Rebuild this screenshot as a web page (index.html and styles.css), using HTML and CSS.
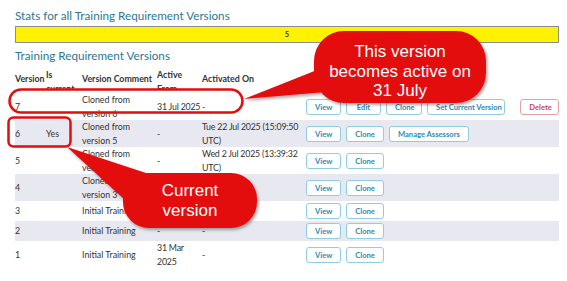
FILE: index.html
```html
<!DOCTYPE html>
<html lang="en">
<head>
    <meta charset="UTF-8">
    <meta name="viewport" content="width=device-width, initial-scale=1.0">
    <title>Training Requirement Versions</title>
    <link rel="stylesheet" href="styles.css">
</head>
<body>
    <div class="page">
        <h2>Stats for all Training Requirement Versions</h2>
        <div class="stat-bar">5</div>

        <h2 class="section-title">Training Requirement Versions</h2>
        <table class="versions">
            <colgroup>
                <col class="col-version">
                <col class="col-current">
                <col class="col-comment">
                <col class="col-from">
                <col class="col-activated">
                <col>
            </colgroup>
            <thead>
                <tr>
                    <th><div class="th-in">Version</div></th>
                    <th><div class="th-in">Is current</div></th>
                    <th><div class="th-in">Version Comment</div></th>
                    <th><div class="th-in">Active From</div></th>
                    <th><div class="th-in">Activated On</div></th>
                    <th></th>
                </tr>
            </thead>
            <tbody>
                <tr>
                    <td>7</td>
                    <td></td>
                    <td>Cloned from version 6</td>
                    <td class="date">31 Jul 2025</td>
                    <td class="date">-</td>
                    <td>
                        <div class="actions">
                            <button class="btn">View</button>
                            <button class="btn">Edit</button>
                            <button class="btn">Clone</button>
                            <button class="btn">Set Current Version</button>
                            <button class="btn btn-delete">Delete</button>
                        </div>
                    </td>
                </tr>
                <tr>
                    <td>6</td>
                    <td>Yes</td>
                    <td>Cloned from version 5</td>
                    <td class="date">-</td>
                    <td class="date">Tue 22 Jul 2025 (15:09:50 UTC)</td>
                    <td>
                        <div class="actions">
                            <button class="btn">View</button>
                            <button class="btn">Clone</button>
                            <button class="btn">Manage Assessors</button>
                        </div>
                    </td>
                </tr>
                <tr>
                    <td>5</td>
                    <td></td>
                    <td>Cloned from version 4</td>
                    <td class="date">-</td>
                    <td class="date">Wed 2 Jul 2025 (13:39:32 UTC)</td>
                    <td>
                        <div class="actions">
                            <button class="btn">View</button>
                            <button class="btn">Clone</button>
                        </div>
                    </td>
                </tr>
                <tr>
                    <td>4</td>
                    <td></td>
                    <td>Cloned from version 3</td>
                    <td class="date">-</td>
                    <td class="date">-</td>
                    <td>
                        <div class="actions">
                            <button class="btn">View</button>
                            <button class="btn">Clone</button>
                        </div>
                    </td>
                </tr>
                <tr>
                    <td>3</td>
                    <td></td>
                    <td>Initial Training</td>
                    <td class="date">-</td>
                    <td class="date">-</td>
                    <td>
                        <div class="actions">
                            <button class="btn">View</button>
                            <button class="btn">Clone</button>
                        </div>
                    </td>
                </tr>
                <tr>
                    <td>2</td>
                    <td></td>
                    <td>Initial Training</td>
                    <td class="date">-</td>
                    <td class="date">-</td>
                    <td>
                        <div class="actions">
                            <button class="btn">View</button>
                            <button class="btn">Clone</button>
                        </div>
                    </td>
                </tr>
                <tr>
                    <td>1</td>
                    <td></td>
                    <td>Initial Training</td>
                    <td class="date">31 Mar 2025</td>
                    <td class="date">-</td>
                    <td>
                        <div class="actions">
                            <button class="btn">View</button>
                            <button class="btn">Clone</button>
                        </div>
                    </td>
                </tr>
            </tbody>
        </table>
    </div>

    <!-- annotation layer drawn over the screenshot -->
    <svg class="annotations" width="567" height="281" viewBox="0 0 567 281">
        <defs>
            <filter id="shadow" x="-20%" y="-20%" width="140%" height="150%">
                <feDropShadow dx="1.5" dy="2" stdDeviation="1.5" flood-color="#000" flood-opacity="0.35"/>
            </filter>
        </defs>

        <rect class="ring" x="9.5" y="89.5" width="233" height="23" rx="11.5"/>
        <rect class="ring" x="8.5" y="117.5" width="62" height="29" rx="5"/>

        <g class="bubble" filter="url(#shadow)">
            <polygon points="244,99 322,68 326,92"/>
            <rect x="314" y="31" width="172" height="72" rx="30"/>
        </g>
        <text class="bubble-text" x="400" y="57">This version</text>
        <text class="bubble-text" x="400" y="77">becomes active on</text>
        <text class="bubble-text" x="400" y="96">31 July</text>

        <g class="bubble" filter="url(#shadow)">
            <polygon points="67,147 152,175 125,200"/>
            <rect x="123" y="173" width="134" height="55" rx="26"/>
        </g>
        <text class="bubble-text" x="190" y="196">Current</text>
        <text class="bubble-text" x="190" y="216">version</text>
    </svg>
</body>
</html>
```

FILE: styles.css
```css
body {
    margin: 0;
    font-family: Lato, "Open Sans", sans-serif;
    color: #333;
    background-color: #fff;
    position: relative;
}
.page {
    padding: 7px 8px 0 15px;
}
h2 {
    margin: 0;
    font-size: 11.7px;
    line-height: 16px;
    font-weight: normal;
    color: #2b7892;
}
.section-title {
    margin-top: 4px;
}
.stat-bar {
    margin-top: 3px;
    height: 15px;
    border: 1px solid #8d8d8d;
    background-color: #fff200;
    text-align: center;
    font-size: 7.5px;
    font-weight: bold;
    line-height: 15px;
}
.versions {
    margin-top: 2px;
    width: 100%;
    border-collapse: collapse;
    table-layout: fixed;
    font-size: 8.8px;
    line-height: 13.5px;
}
.col-version { width: 31px; }
.col-current { width: 36px; }
.col-comment { width: 75px; }
.col-from { width: 45px; }
.col-activated { width: 104px; }
.versions th {
    height: 28px;
    padding: 0;
    text-align: left;
    vertical-align: middle;
    font-weight: bold;
}
.th-in {
    max-height: 22px;
    overflow: hidden;
}
.versions td {
    padding: 0;
    vertical-align: middle;
}
.versions td.date {
    letter-spacing: -0.2px;
}
.versions tbody tr:nth-child(even) {
    background-color: #e8e8f0;
}
.actions {
    display: flex;
    gap: 5px;
    padding: 2px 0;
}
.btn {
    min-width: 35px;
    height: 16px;
    box-sizing: border-box;
    padding: 0 8px;
    border: 1px solid #8fcde0;
    border-radius: 3px;
    background-color: #fff;
    color: #2b8db3;
    font-family: Lato, sans-serif;
    font-size: 7.6px;
    font-weight: bold;
    line-height: 14px;
    white-space: nowrap;
}
.btn-delete {
    margin-left: 10px;
    border-color: #e7a1a4;
    color: #d2475a;
}
.annotations {
    position: absolute;
    top: 0;
    left: 0;
    pointer-events: none;
}
.ring {
    fill: none;
    stroke: #e20d0d;
    stroke-width: 2.5;
}
.bubble {
    fill: #e30b0b;
}
.bubble-text {
    fill: #fff;
    font-family: "Liberation Sans", Arial, sans-serif;
    font-size: 17px;
    text-anchor: middle;
}
```
